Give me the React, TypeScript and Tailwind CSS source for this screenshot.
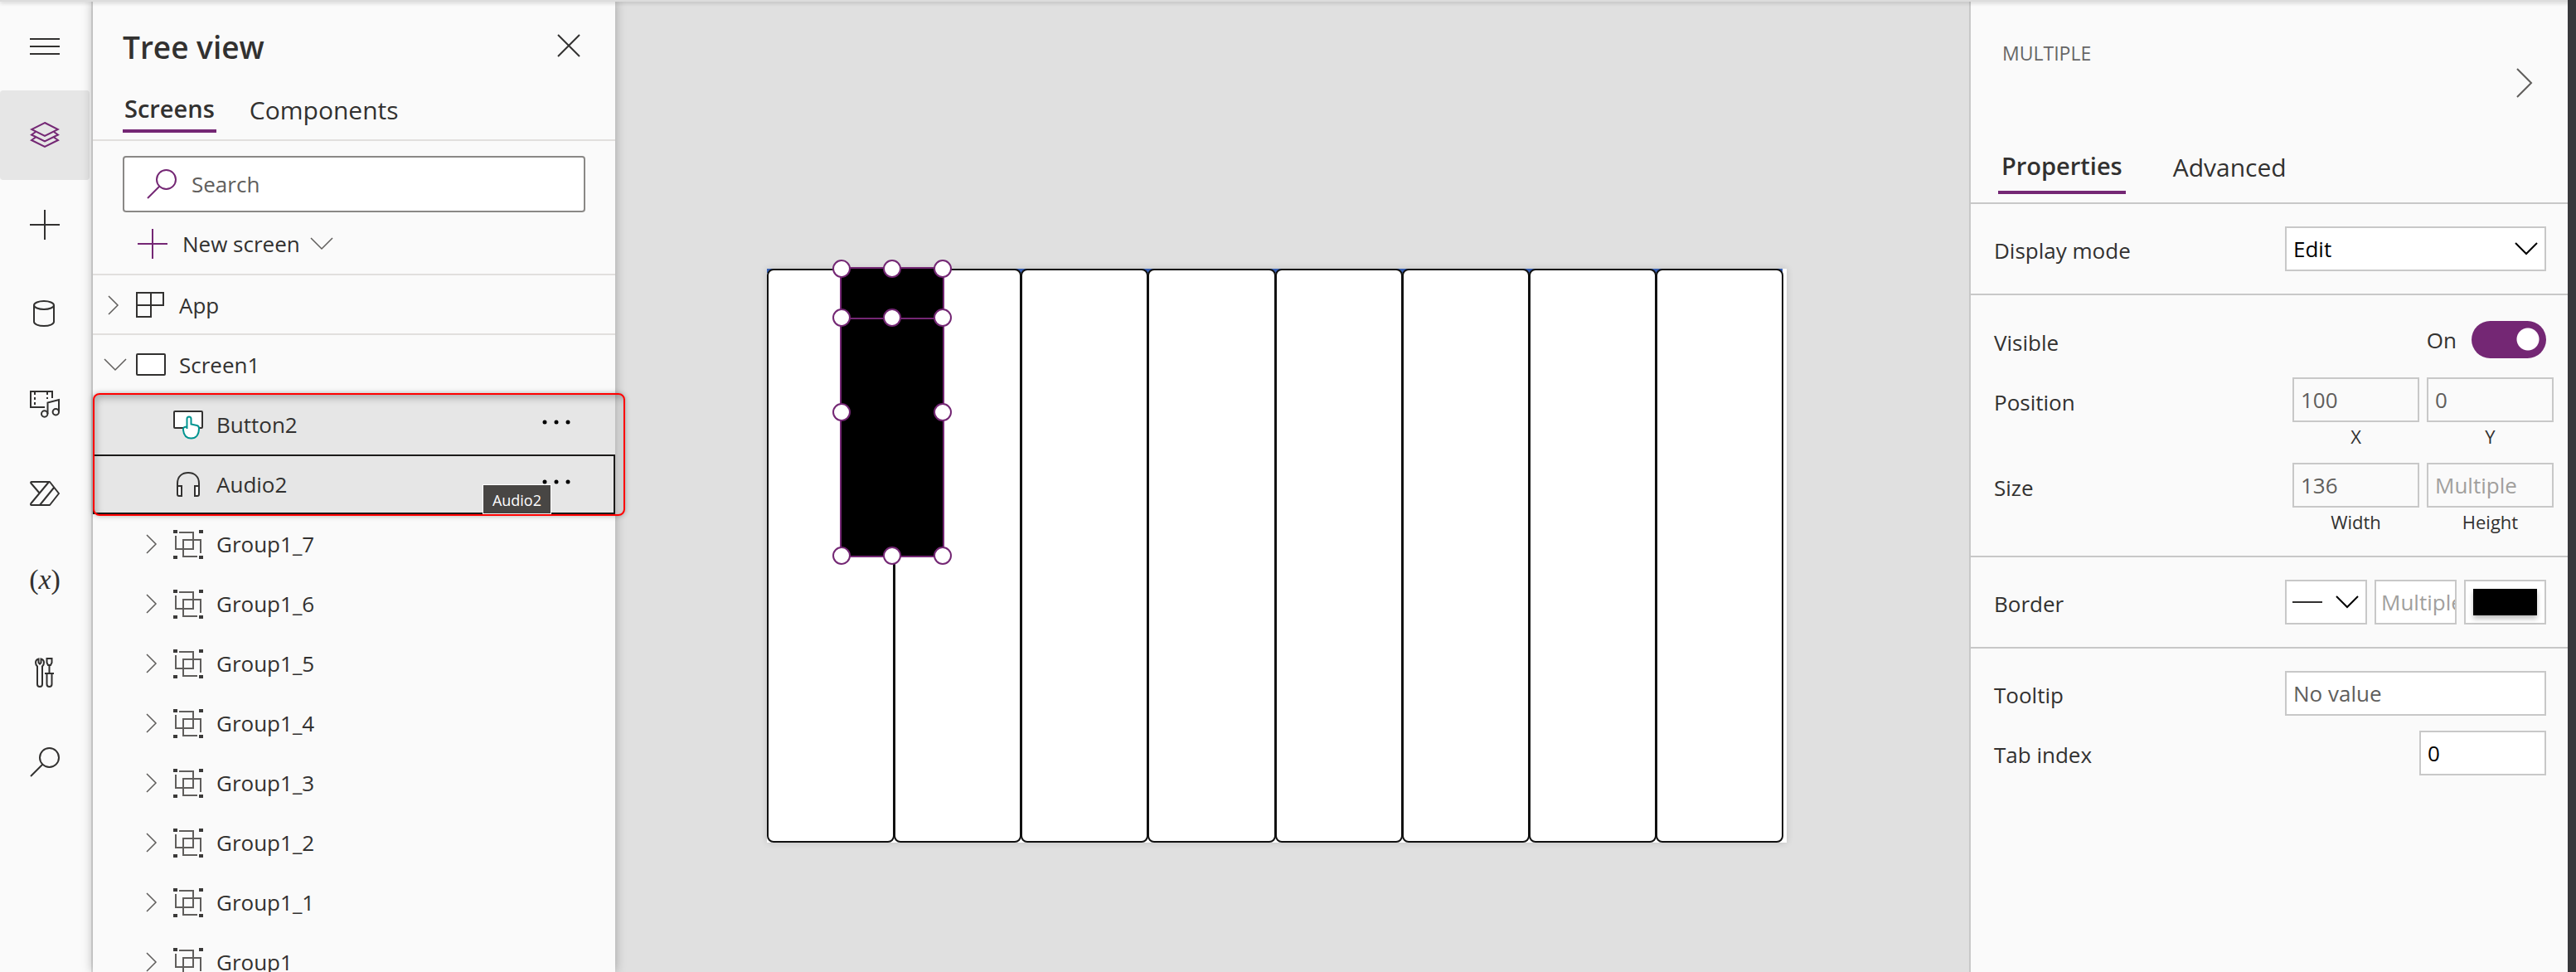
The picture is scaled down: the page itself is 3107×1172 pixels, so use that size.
import React from "react";

type P = { className?: string };

const Svg = ({ w, h, children, className = "", sw = 2 }: { w: number; h: number; children: React.ReactNode; className?: string; sw?: number }) => (
  <svg width={w} height={h} viewBox={`0 0 ${w} ${h}`} fill="none" stroke="currentColor" strokeWidth={sw} className={`shrink-0 ${className}`} aria-hidden="true">
    {children}
  </svg>
);

const MenuIcon = () => (
  <Svg w={36} h={36}>
    <path d="M0 10h36M0 19h36M0 28h36" />
  </Svg>
);
const LayersIcon = () => (
  <Svg w={36} h={36} className="text-[#742774]">
    <path d="M18 3 34 11 18 19 2 11Z" />
    <path d="M7 14 2 17.500 18 25.500 34 17.500 29 14M7 20.500 2 24 18 32 34 24 29 20.500" />
  </Svg>
);
const PlusIcon = ({ className }: P) => (
  <Svg w={36} h={36} className={className}>
    <path d="M0 18h36M18 0v36" />
  </Svg>
);
const DataIcon = () => (
  <Svg w={36} h={36}>
    <ellipse cx="17" cy="7" rx="12" ry="5" />
    <path d="M5 7v20c0 2.800 5.400 5 12 5s12-2.200 12-5V7" />
  </Svg>
);
const MediaIcon = () => (
  <Svg w={36} h={36}>
    <path d="M18 22H1V3h26v8" />
    <path d="M6 4v18M21 4v8" strokeDasharray="3 3" />
    <path d="M21.500 30V16.500L35 13v14.500" />
    <circle cx="17.700" cy="30" r="3.700" />
    <circle cx="31.300" cy="27.700" r="3.700" />
  </Svg>
);
const FlowIcon = () => (
  <Svg w={36} h={36}>
    <path d="M2 4h22l11 14-11 14H2c-1 0-1.300-1-.6-2L23 4M12 18 1.300 5.500C.9 5 1.200 4 2 4M12 32 29 11" strokeLinejoin="round" />
  </Svg>
);
const ToolsIcon = () => (
  <Svg w={36} h={36}>
    <path d="M10.500 1.500V6l1.500 1.500L13.500 6V1.500C15.500 2 17 4 17 6s-1 3.500-2 4.500V32c0 4-6 4-6 0V10.500C8 9.500 7 8 7 6s1.500-4 3.500-4.500Z" />
    <path d="M20.500 1h6v5l-1.500 3h-3l-1.500-3ZM23.500 9v10M18 19h11M20.500 19v13c0 4 6 4 6 0V19" />
  </Svg>
);
const SearchIcon = ({ className }: P) => (
  <Svg w={36} h={36} className={className}>
    <circle cx="23.500" cy="12.500" r="11.500" />
    <path d="M15.500 20.500 1 35" />
  </Svg>
);
const ChevronRight = () => (
  <Svg w={14} h={24} sw={1.5} className="text-[#605e5c]">
    <path d="M1 1 12 12 1 23" />
  </Svg>
);
const ChevronDown = ({ className = "text-[#605e5c]", sw = 1.5 }: { className?: string; sw?: number }) => (
  <Svg w={28} h={16} className={className} sw={sw}>
    <path d="M1 1 14 14 27 1" />
  </Svg>
);
const AppIcon = () => (
  <Svg w={36} h={36}>
    <path d="M1 3h32v15H1ZM18 3v29H1V3" />
  </Svg>
);
const ScreenIcon = () => (
  <Svg w={36} h={28}>
    <rect x="1" y="1" width="34" height="25" rx="1" fill="white" />
  </Svg>
);
const ButtonIcon = () => (
  <Svg w={36} h={36}>
    <rect x="1" y="2" width="34" height="20" rx="1" fill="white" />
    <path d="M16.500 23V11c0-3.500 5-3.500 5 0v6.500l7 1.500c2 .5 2.500 1.500 2.500 3.500 0 7.500-3.500 12-9.500 12-6 0-9-4.500-9.500-10-.3-3 1.500-4.500 4.500-3.500" fill="white" stroke="#009490" />
  </Svg>
);
const AudioIcon = () => (
  <Svg w={36} h={36}>
    <path d="M5 30V17C5 8 11 4 18 4s13 4 13 13v13" />
    <path d="M5 20h5v12H7c-1 0-2-1-2-2ZM31 20h-5v12h3c1 0 2-1 2-2Z" fill="white" />
  </Svg>
);
const GroupIcon = () => (
  <Svg w={36} h={36}>
    <path d="M7 4h17v20H3V8M29 33H12V13h21v16" stroke="#605e5c" />
    <path d="M0 1h5v4H0zM31 1h5v4h-5zM0 32h5v4H0zM31 32h5v4h-5z" fill="#3b3a39" stroke="none" />
  </Svg>
);
const Dots = () => (
  <Svg w={34} h={8}>
    <g fill="black" stroke="none">
      <circle cx="3" cy="4" r="2.500" />
      <circle cx="17" cy="4" r="2.500" />
      <circle cx="31" cy="4" r="2.500" />
    </g>
  </Svg>
);

const RAIL: { label: string; icon: React.ReactNode; active?: boolean }[] = [
  { label: "Menu", icon: <MenuIcon /> },
  { label: "Tree view", icon: <LayersIcon />, active: true },
  { label: "Insert", icon: <PlusIcon /> },
  { label: "Data", icon: <DataIcon /> },
  { label: "Media", icon: <MediaIcon /> },
  { label: "Power Automate", icon: <FlowIcon /> },
  { label: "Variables", icon: <span className="pb-2 font-[Liberation_Serif] text-[34px] leading-9">(<i>x</i>)</span> },
  { label: "Advanced tools", icon: <ToolsIcon /> },
  { label: "Search", icon: <SearchIcon /> },
];

const GROUPS = ["Group1_7", "Group1_6", "Group1_5", "Group1_4", "Group1_3", "Group1_2", "Group1_1", "Group1"];

function TreeView() {
  return (
    <aside className="relative z-10 w-[630px] shrink-0 bg-[#fafafa] shadow-[0_0_12px_rgba(0,0,0,0.3)]">
      <div className="flex h-[106px] items-center justify-between pt-1 pr-[42px] pl-9">
        <h1 className="pt-1 text-[37px] leading-[52px] font-semibold">Tree view</h1>
        <button aria-label="Close">
          <Svg w={28} h={28}>
            <path d="M1 1 27 27M27 1 1 27" />
          </Svg>
        </button>
      </div>
      <div role="tablist" className="flex h-16 items-start gap-9 border-b-2 border-[#e1dfdd] pl-9 text-[30px] leading-[50px]">
        <button role="tab" aria-selected="true" className="h-[54px] border-b-4 border-[#742774] px-[2px] text-[29px] font-semibold">Screens</button>
        <button role="tab" aria-selected="false" className="h-[54px] px-1">Components</button>
      </div>
      <label className="mx-9 mt-[18px] flex h-[68px] items-center gap-[18px] rounded-[4px] border-2 border-[#8a8886] bg-white pl-[27px]">
        <SearchIcon className="text-[#742774]" />
        <input aria-label="Search" placeholder="Search" className="min-w-0 flex-1 bg-transparent text-[26px] outline-none placeholder:text-[#605e5c]" />
      </label>
      <div className="flex h-[76px] border-b-2 border-[#e1dfdd] pl-[54px]">
        <button className="flex h-[76px] items-center">
          <PlusIcon className="text-[#742774]" />
          <span className="mr-3 ml-[18px]">New screen</span>
          <ChevronDown />
        </button>
      </div>
      <ul role="tree">
        <li role="treeitem" className="flex h-[72px] items-center border-b-2 border-[#e1dfdd] pt-[2px] pl-[18px]">
          <span className="flex w-[34px]"><ChevronRight /></span>
          <AppIcon />
          <span className="ml-4">App</span>
        </li>
        <li role="treeitem" aria-expanded="true">
          <div className="flex h-[72px] items-center pl-[13px]">
            <span className="flex w-[39px]"><ChevronDown /></span>
            <ScreenIcon />
            <span className="ml-4">Screen1</span>
          </div>
          <ul role="group">
            <li className="relative">
              <div role="treeitem" className="flex h-[72px] items-center bg-[#e6e6e6] pr-[54px] pl-[97px]">
                <ButtonIcon />
                <span className="ml-4 flex-1">Button2</span>
                <button aria-label="More options for Button2" className="pb-[6px]"><Dots /></button>
              </div>
              <div role="treeitem" className="relative flex h-[72px] items-center border-2 border-[#1b1a19] bg-[#e6e6e6] pr-[52px] pl-[95px]">
                <AudioIcon />
                <span className="ml-4 flex-1">Audio2</span>
                <button aria-label="More options for Audio2" className="pb-[6px]"><Dots /></button>
                <div role="tooltip" className="absolute right-[75px] bottom-[-2px] h-9 border border-white bg-[#484644] px-[11px] text-[18px] leading-[36px] text-white">Audio2</div>
              </div>
              <div className="pointer-events-none absolute -top-[2px] -right-3 -bottom-[2px] left-0 rounded-lg border-2 border-[#ff0000] shadow-[0_0_6px_rgba(0,0,0,0.3),inset_2px_4px_8px_rgba(0,0,0,0.25)]" />
            </li>
            {GROUPS.map((name) => (
              <li key={name} role="treeitem" className="flex h-[72px] items-center pl-16">
                <span className="flex w-[33px]"><ChevronRight /></span>
                <GroupIcon />
                <span className="ml-4">{name}</span>
              </li>
            ))}
          </ul>
        </li>
      </ul>
    </aside>
  );
}

const Handle = ({ at }: { at: string }) => (
  <span className={`absolute size-[22px] -translate-x-1/2 -translate-y-1/2 rounded-full border-2 border-[#742774] bg-white ${at}`} />
);

function Canvas() {
  return (
    <main className="flex min-w-0 flex-1 justify-center bg-[#e0e0e0] pr-[37px]">
      <div className="relative mt-[324px] flex h-[692px] w-[1230px] bg-white shadow-[0_0_8px_rgba(0,0,0,0.15)]">
        <div className="absolute inset-x-0 top-0 mr-[5px] h-[5px] bg-[#3860b2]" />
        <div className="relative flex flex-1 pr-[5px]">
          {Array.from({ length: 8 }, (_, i) => (
            <div key={i} className="-mr-px flex-1 rounded-[8px] border-2 border-[#111] bg-white" />
          ))}
        </div>
        <div className="absolute top-0 left-[90px] h-[346px] w-[122px] bg-black">
          <div className="absolute -inset-[2px] border-2 border-[#742774]" />
          <div className="absolute top-[59px] h-[2px] w-full bg-[#742774]" />
          <Handle at="left-0 top-0" />
          <Handle at="left-1/2 top-0" />
          <Handle at="left-full top-0" />
          <Handle at="left-0 top-[59px]" />
          <Handle at="left-1/2 top-[59px]" />
          <Handle at="left-full top-[59px]" />
          <Handle at="left-0 top-1/2" />
          <Handle at="left-full top-1/2" />
          <Handle at="left-0 top-full" />
          <Handle at="left-1/2 top-full" />
          <Handle at="left-full top-full" />
        </div>
      </div>
    </main>
  );
}

const box = "h-[54px] border-2 border-[#c8c8c8] text-[26px] outline-none";

function NumberField({ id, label, value, placeholder }: { id: string; label: string; value?: string; placeholder?: string }) {
  return (
    <div className="flex w-[153px] flex-col items-center">
      <input id={id} defaultValue={value} placeholder={placeholder} className={`${box} w-full bg-[#fafafa] px-2 text-[#605e5c] placeholder:text-[#a19f9d]`} />
      <label htmlFor={id} className="mt-[2px] text-[22px] leading-[30px]">{label}</label>
    </div>
  );
}

function Properties() {
  return (
    <aside className="relative z-10 box-content w-[720px] shrink-0 border-l-2 border-[#c8c8c8] bg-[#fafafa]">
      <div className="flex h-[170px] items-start justify-between pt-12 pr-[41px] pl-[38px]">
        <span className="text-[23px] leading-8 text-[#666]">MULTIPLE</span>
        <button aria-label="Collapse" className="mt-[34px]">
          <Svg w={22} h={36} className="text-[#605e5c]">
            <path d="M2 1 19 18 2 35" />
          </Svg>
        </button>
      </div>
      <div role="tablist" className="flex h-[76px] items-start gap-[53px] border-b-2 border-[#c8c8c8] pl-[33px] text-[30px] leading-[60px]">
        <button role="tab" aria-selected="true" className="h-16 border-b-4 border-[#742774] px-1 text-[29px] font-semibold">Properties</button>
        <button role="tab" aria-selected="false" className="h-16 px-1">Advanced</button>
      </div>

      <section className="flex h-[110px] items-center justify-between border-b-2 border-[#c8c8c8] pr-[26px] pl-7">
        <label htmlFor="mode" className="pt-1">Display mode</label>
        <div className="relative flex w-[315px]">
          <select id="mode" className={`${box} w-full appearance-none bg-white px-2 text-black`}>
            <option>Edit</option>
          </select>
          <ChevronDown className="pointer-events-none absolute top-[19px] right-[10px] text-black" sw={2} />
        </div>
      </section>

      <section className="h-[316px] border-b-2 border-[#c8c8c8] pl-7">
        <div className="flex h-[99px] items-start justify-between pt-[31px] pr-[26px]">
          <label htmlFor="visible" className="pt-2">Visible</label>
          <div className="flex items-center gap-[18px]">
            <span>On</span>
            <input id="visible" type="checkbox" role="switch" defaultChecked className="h-[45px] w-[90px] appearance-none rounded-full bg-[#742774] bg-[radial-gradient(circle_at_68px_22px,white_13px,transparent_14px)]" />
          </div>
        </div>
        <div className="flex h-[103px] items-start justify-between pr-[17px]">
          <span className="pt-3">Position</span>
          <div className="flex gap-[9px]">
            <NumberField id="x" label="X" value="100" />
            <NumberField id="y" label="Y" value="0" />
          </div>
        </div>
        <div className="flex items-start justify-between pr-[17px]">
          <span className="pt-3">Size</span>
          <div className="flex gap-[9px]">
            <NumberField id="width" label="Width" value="136" />
            <NumberField id="height" label="Height" placeholder="Multiple" />
          </div>
        </div>
      </section>

      <section className="flex h-[110px] items-center justify-between border-b-2 border-[#c8c8c8] pr-[26px] pl-7">
        <label htmlFor="thickness" className="pt-1">Border</label>
        <div className="flex gap-[9px]">
          <button aria-label="Border style" className="flex h-[54px] w-[99px] items-center justify-between border-2 border-[#c8c8c8] bg-white pr-2 pl-[7px]">
            <span className="h-[2px] w-9 bg-[#323130]" />
            <ChevronDown className="text-black" sw={2} />
          </button>
          <input id="thickness" placeholder="Multiple" className={`${box} w-[99px] bg-white pl-[6px] placeholder:text-[#a19f9d]`} />
          <button aria-label="Border color" className="h-[54px] w-[99px] border-2 border-[#c8c8c8] bg-white px-[9px]">
            <span className="block h-8 bg-black shadow-[0_4px_6px_rgba(0,0,0,0.25)]" />
          </button>
        </div>
      </section>

      <section className="flex flex-col gap-[18px] pt-[27px] pr-[26px] pl-7">
        <div className="flex items-center justify-between">
          <label htmlFor="tooltip" className="pt-1">Tooltip</label>
          <input id="tooltip" placeholder="No value" className={`${box} w-[315px] bg-white px-2 placeholder:text-[#605e5c]`} />
        </div>
        <div className="flex items-center justify-between">
          <label htmlFor="tabindex" className="pt-1">Tab index</label>
          <input id="tabindex" defaultValue="0" className={`${box} w-[153px] bg-white px-2 text-black`} />
        </div>
      </section>
    </aside>
  );
}

export default function App() {
  return (
    <div className="relative flex h-screen overflow-hidden bg-[#fafafa] font-['Open_Sans','Noto_Sans',sans-serif] text-[26px] leading-9 text-[#323130]">
      <div className="pointer-events-none absolute inset-x-0 top-0 z-20 h-[2px] bg-[#dcdcdc] shadow-[0_1px_5px_rgba(0,0,0,0.3)]" />
      <nav className="flex w-28 shrink-0 flex-col border-r-2 border-[#e0e0e0] pt-px">
        {RAIL.map(({ label, icon, active }) => (
          <button key={label} aria-label={label} className={`flex h-[108px] w-[108px] shrink-0 items-center justify-center rounded-[4px] ${active ? "bg-[#e6e6e6]" : ""}`}>
            {icon}
          </button>
        ))}
      </nav>
      <TreeView />
      <Canvas />
      <Properties />
      <div className="z-20 w-[10px] shrink-0 bg-[#38383b]" />
    </div>
  );
}
